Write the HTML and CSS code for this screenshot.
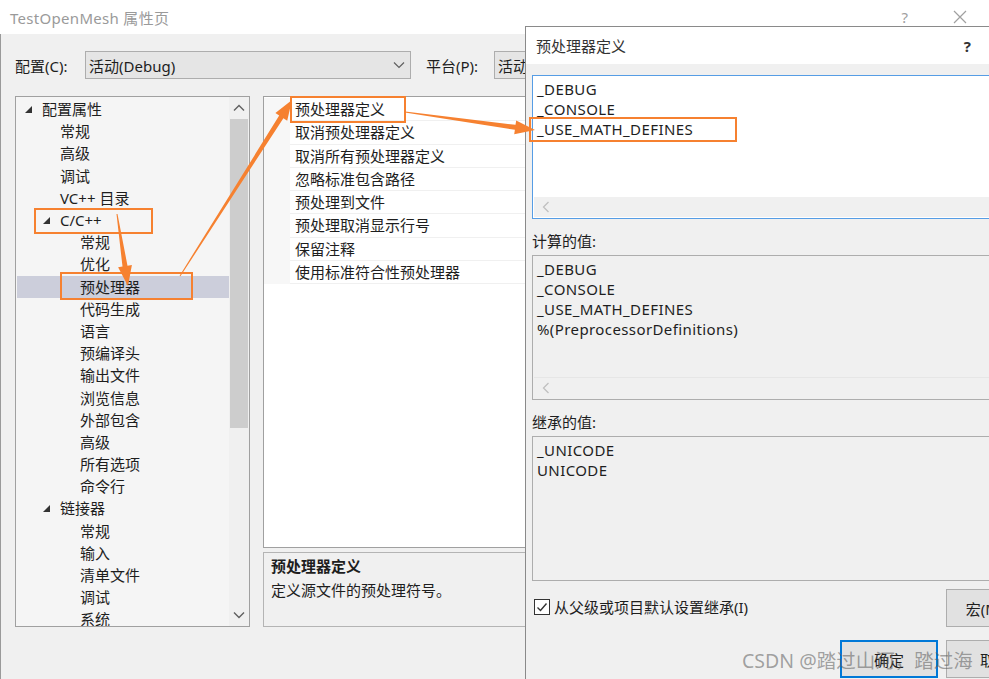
FILE: index.html
```html
<!DOCTYPE html>
<html lang="zh-CN">
<head>
    <meta charset="UTF-8">
    <meta name="viewport" content="width=device-width, initial-scale=1.0">
    <title>TestOpenMesh 属性页</title>
    <link rel="stylesheet" href="styles.css">
</head>
<body>
<div class="main">
    <div class="titlebar">
        <span class="title">TestOpenMesh 属性页</span>
        <span class="tb-btn help">?</span>
        <span class="tb-btn close">
            <svg width="14" height="14" viewBox="0 0 14 14"><path d="M1 1 L13 13 M13 1 L1 13" stroke="#a0a0a0" stroke-width="1.2" fill="none"/></svg>
        </span>
    </div>
    <div class="main-body">
        <div class="config-row">
            <span class="cfg-label">配置(C):</span>
            <div class="combo combo-config">
                <span>活动(Debug)</span>
                <svg class="chev" width="12" height="8" viewBox="0 0 12 8"><path d="M1 1.5 L6 6.5 L11 1.5" stroke="#606060" stroke-width="1.2" fill="none"/></svg>
            </div>
            <span class="cfg-label plat">平台(P):</span>
            <div class="combo combo-plat"><span>活动(x64)</span></div>
        </div>

        <div class="panes">
            <!-- Tree of property pages -->
            <div class="tree">
                <div class="tree-list">
                    <div class="row l0"><span class="caret"></span>配置属性</div>
                    <div class="row l1">常规</div>
                    <div class="row l1">高级</div>
                    <div class="row l1">调试</div>
                    <div class="row l1">VC++ 目录</div>
                    <div class="row l1"><span class="caret"></span>C/C++</div>
                    <div class="row l2">常规</div>
                    <div class="row l2">优化</div>
                    <div class="row l2 selected">预处理器</div>
                    <div class="row l2">代码生成</div>
                    <div class="row l2">语言</div>
                    <div class="row l2">预编译头</div>
                    <div class="row l2">输出文件</div>
                    <div class="row l2">浏览信息</div>
                    <div class="row l2">外部包含</div>
                    <div class="row l2">高级</div>
                    <div class="row l2">所有选项</div>
                    <div class="row l2">命令行</div>
                    <div class="row l1"><span class="caret"></span>链接器</div>
                    <div class="row l2">常规</div>
                    <div class="row l2">输入</div>
                    <div class="row l2">清单文件</div>
                    <div class="row l2">调试</div>
                    <div class="row l2">系统</div>
                </div>
                <div class="vscroll">
                    <div class="sb-btn">
                        <svg width="12" height="8" viewBox="0 0 12 8"><path d="M1 6.5 L6 1.5 L11 6.5" stroke="#606060" stroke-width="1.4" fill="none"/></svg>
                    </div>
                    <div class="sb-thumb"></div>
                    <div class="sb-track"></div>
                    <div class="sb-btn">
                        <svg width="12" height="8" viewBox="0 0 12 8"><path d="M1 1.5 L6 6.5 L11 1.5" stroke="#606060" stroke-width="1.4" fill="none"/></svg>
                    </div>
                </div>
            </div>

            <div class="right-pane">
                <div class="grid">
                    <div class="grow"><span class="gcell-l"></span><span class="gcell">预处理器定义</span></div>
                    <div class="grow"><span class="gcell-l"></span><span class="gcell">取消预处理器定义</span></div>
                    <div class="grow"><span class="gcell-l"></span><span class="gcell">取消所有预处理器定义</span></div>
                    <div class="grow"><span class="gcell-l"></span><span class="gcell">忽略标准包含路径</span></div>
                    <div class="grow"><span class="gcell-l"></span><span class="gcell">预处理到文件</span></div>
                    <div class="grow"><span class="gcell-l"></span><span class="gcell">预处理取消显示行号</span></div>
                    <div class="grow"><span class="gcell-l"></span><span class="gcell">保留注释</span></div>
                    <div class="grow"><span class="gcell-l"></span><span class="gcell">使用标准符合性预处理器</span></div>
                </div>
                <div class="desc">
                    <div class="desc-title">预处理器定义</div>
                    <div class="desc-text">定义源文件的预处理符号。</div>
                </div>
            </div>
        </div>
    </div>
</div>

<!-- Preprocessor definitions dialog, on top of the property page -->
<div class="dialog">
    <div class="dlg-title">
        <span>预处理器定义</span>
        <span class="dlg-help">?</span>
    </div>
    <div class="dlg-body">
        <div class="edit-box">
            <div class="lines">
                <div>_DEBUG</div>
                <div>_CONSOLE</div>
                <div>_USE_MATH_DEFINES</div>
            </div>
            <div class="hscroll">
                <svg width="8" height="12" viewBox="0 0 8 12"><path d="M6.5 1 L1.5 6 L6.5 11" stroke="#c0c0c0" stroke-width="1.3" fill="none"/></svg>
            </div>
        </div>

        <div class="dlg-label">计算的值:</div>
        <div class="ro-box">
            <div class="lines">
                <div>_DEBUG</div>
                <div>_CONSOLE</div>
                <div>_USE_MATH_DEFINES</div>
                <div>%(PreprocessorDefinitions)</div>
            </div>
            <div class="hscroll">
                <svg width="8" height="12" viewBox="0 0 8 12"><path d="M6.5 1 L1.5 6 L6.5 11" stroke="#c0c0c0" stroke-width="1.3" fill="none"/></svg>
            </div>
        </div>

        <div class="dlg-label">继承的值:</div>
        <div class="ro-box inherit">
            <div class="lines">
                <div>_UNICODE</div>
                <div>UNICODE</div>
            </div>
        </div>

        <div class="dlg-footer">
            <label class="check-row">
                <span class="checkbox">
                    <svg width="14" height="14" viewBox="0 0 14 14"><path d="M2.5 7.5 L5.5 10.5 L11.5 3.5" stroke="#333" stroke-width="1.4" fill="none"/></svg>
                </span>
                从父级或项目默认设置继承(I)
            </label>
            <button type="button" class="btn">宏(M) &gt;&gt;</button>
        </div>
        <div class="dlg-buttons">
            <button type="button" class="btn default">确定</button>
            <button type="button" class="btn">取消</button>
        </div>
    </div>
</div>

<!-- Screenshot annotations -->
<svg class="marks" width="989" height="679" viewBox="0 0 989 679">
    <g fill="none" stroke="#f68130" stroke-width="2">
        <rect x="35" y="209" width="117" height="24"/>
        <rect x="61" y="273" width="131" height="26"/>
        <rect x="291" y="97" width="114" height="25"/>
        <rect x="530" y="118" width="206" height="23"/>
    </g>
    <g fill="#f68130">
        <polygon points="116.5,214.1 122.5,266.6 118.1,267.3 128,286 131.9,265.1 127.5,265.8 117.5,213.9"/>
        <polygon points="180.4,276.3 283.4,118.2 287.2,120.7 292,100 275.4,113.1 279.2,115.6 179.6,275.7"/>
        <polygon points="404.9,112.5 514.9,129.8 514.2,134.2 535,130 516.2,120.4 515.5,124.8 405.1,111.5"/>
    </g>
</svg>

<div class="watermark">CSDN @踏过山河，踏过海</div>
</body>
</html>
```

FILE: styles.css
```css
/* Page */
body {
    margin: 0;
    width: 989px;
    height: 679px;
    overflow: hidden;
    position: relative;
    background-color: #f0f0f0;
    font-family: "Noto Sans", "Noto Sans CJK SC", sans-serif;
    font-size: 15px;
    color: #1e1e1e;
}

/* Main property page window */
.main {
    height: 679px;
    display: flex;
    flex-direction: column;
}

.titlebar {
    height: 34px;
    flex: none;
    background-color: #fff;
    display: flex;
    align-items: center;
    padding-left: 10px;
}

.title {
    flex: 1;
    color: #9a9a9a;
    font-size: 15px;
    letter-spacing: 0.3px;
}

.tb-btn {
    color: #a0a0a0;
    font-size: 15px;
}

.tb-btn.help {
    margin-right: 45px;
}

.tb-btn.close {
    margin-right: 22px;
    display: flex;
}

.main-body {
    flex: 1;
    border-left: 1px solid #9a9a9a;
}

/* Configuration row */
.config-row {
    display: flex;
    align-items: center;
    height: 28px;
    padding: 17px 0 0 14px;
}

.cfg-label {
    width: 70px;
}

.cfg-label.plat {
    width: 68px;
    margin-left: 15px;
}

.combo {
    box-sizing: border-box;
    height: 28px;
    border: 1px solid #adadad;
    background-color: #e5e5e5;
    display: flex;
    align-items: center;
    padding-left: 3px;
}

.combo-config {
    width: 326px;
}

.combo-plat {
    width: 120px;
}

.combo .chev {
    margin-left: auto;
    margin-right: 5px;
}

/* Panes */
.panes {
    display: flex;
    gap: 13px;
    padding: 17px 0 0 14px;
}

/* Tree */
.tree {
    box-sizing: border-box;
    width: 235px;
    height: 531px;
    border: 1px solid #a0a0a0;
    background-color: #f5f5f5;
    display: flex;
}

.tree-list {
    flex: 1;
    overflow: hidden;
    padding: 1px 0 0 1px;
}

.row {
    height: 22.2px;
    display: flex;
    align-items: center;
    white-space: nowrap;
    line-height: 22px;
}

.row.l0 {
    padding-left: 25px;
}

.row.l1 {
    padding-left: 43px;
}

.row.l2 {
    padding-left: 63px;
}

.row.selected {
    background-color: #cccedb;
}

.caret {
    width: 17px;
    margin-left: -17px;
    display: flex;
    align-items: center;
}

.caret::before {
    content: "";
    width: 0;
    height: 0;
    border-style: solid;
    border-width: 0 0 7px 7px;
    border-color: transparent transparent #333 transparent;
    margin-top: 1px;
}

.vscroll {
    width: 20px;
    display: flex;
    flex-direction: column;
    background-color: #f0f0f0;
}

.sb-btn {
    height: 22px;
    display: flex;
    align-items: center;
    justify-content: center;
}

.sb-thumb {
    height: 309px;
    margin: 0 1px;
    background-color: #cdcdcd;
}

.sb-track {
    flex: 1;
}

/* Property grid */
.right-pane {
    width: 300px;
}

.grid {
    box-sizing: border-box;
    height: 452px;
    border: 1px solid #a0a0a0;
    background-color: #fff;
    padding-top: 1px;
}

.grow {
    height: 23.3px;
    display: flex;
}

.gcell-l {
    width: 26px;
    background-color: #f7f7f7;
}

.gcell {
    flex: 1;
    padding-left: 5px;
    line-height: 23px;
    border-bottom: 1px solid #f0f0f0;
    white-space: nowrap;
}

.desc {
    box-sizing: border-box;
    height: 75px;
    margin-top: 4px;
    border: 1px solid #b4b4b4;
    padding: 2px 0 0 7px;
}

.desc-title {
    font-weight: bold;
    line-height: 22px;
}

.desc-text {
    line-height: 26px;
}

/* Dialog */
.dialog {
    position: absolute;
    left: 525px;
    top: 26px;
    width: 525px;
    height: 680px;
    box-sizing: border-box;
    border-left: 1px solid #8a8a8a;
    border-top: 1px solid #8a8a8a;
    background-color: #f0f0f0;
}

.dlg-title {
    height: 37px;
    background-color: #fff;
    display: flex;
    align-items: center;
    padding-left: 10px;
    color: #333;
}

.dlg-title span:first-child {
    flex: 1;
}

.dlg-help {
    font-weight: bold;
    margin-right: 79px;
    font-size: 15px;
}

.dlg-body {
    padding: 11px 6px 0 6px;
}

.lines {
    padding: 3px 0 0 4px;
    line-height: 20px;
    letter-spacing: 0.4px;
    flex: 1;
}

.edit-box {
    box-sizing: border-box;
    height: 144px;
    border: 1px solid #569de5;
    background-color: #fff;
    display: flex;
    flex-direction: column;
}

.hscroll {
    height: 20px;
    margin: 0 1px 1px 1px;
    background-color: #f0f0f0;
    display: flex;
    align-items: center;
    padding-left: 8px;
}

.dlg-label {
    line-height: 22px;
    margin-top: 11px;
    margin-bottom: 3px;
}

.ro-box {
    box-sizing: border-box;
    height: 145px;
    border: 1px solid #adadad;
    display: flex;
    flex-direction: column;
}

.ro-box .hscroll {
    background-color: #f0f0f0;
    border-top: 1px solid #e6e6e6;
}

.ro-box.inherit .lines {
    padding-top: 3px;
}

.dlg-footer {
    display: flex;
    align-items: flex-start;
    margin-top: 8px;
}

.check-row {
    flex: 1;
    display: flex;
    align-items: center;
    gap: 4px;
    padding: 7px 0 0 2px;
}

.checkbox {
    box-sizing: border-box;
    width: 16px;
    height: 16px;
    border: 1px solid #333;
    background-color: #fff;
    display: flex;
    align-items: center;
    justify-content: center;
}

.btn {
    box-sizing: border-box;
    width: 98px;
    height: 38px;
    border: 1px solid #adadad;
    background-color: #e1e1e1;
    font-family: inherit;
    font-size: 15px;
    color: #1e1e1e;
}

.btn.default {
    border: 2px solid #0078d7;
}

.dlg-buttons {
    display: flex;
    justify-content: flex-end;
    gap: 8px;
    margin-top: 13px;
}

/* Annotations */
.marks {
    position: absolute;
    left: 0;
    top: 0;
}

.watermark {
    position: absolute;
    left: 742px;
    top: 645px;
    font-size: 19.5px;
    color: rgba(90, 90, 90, 0.55);
    white-space: nowrap;
}
```
